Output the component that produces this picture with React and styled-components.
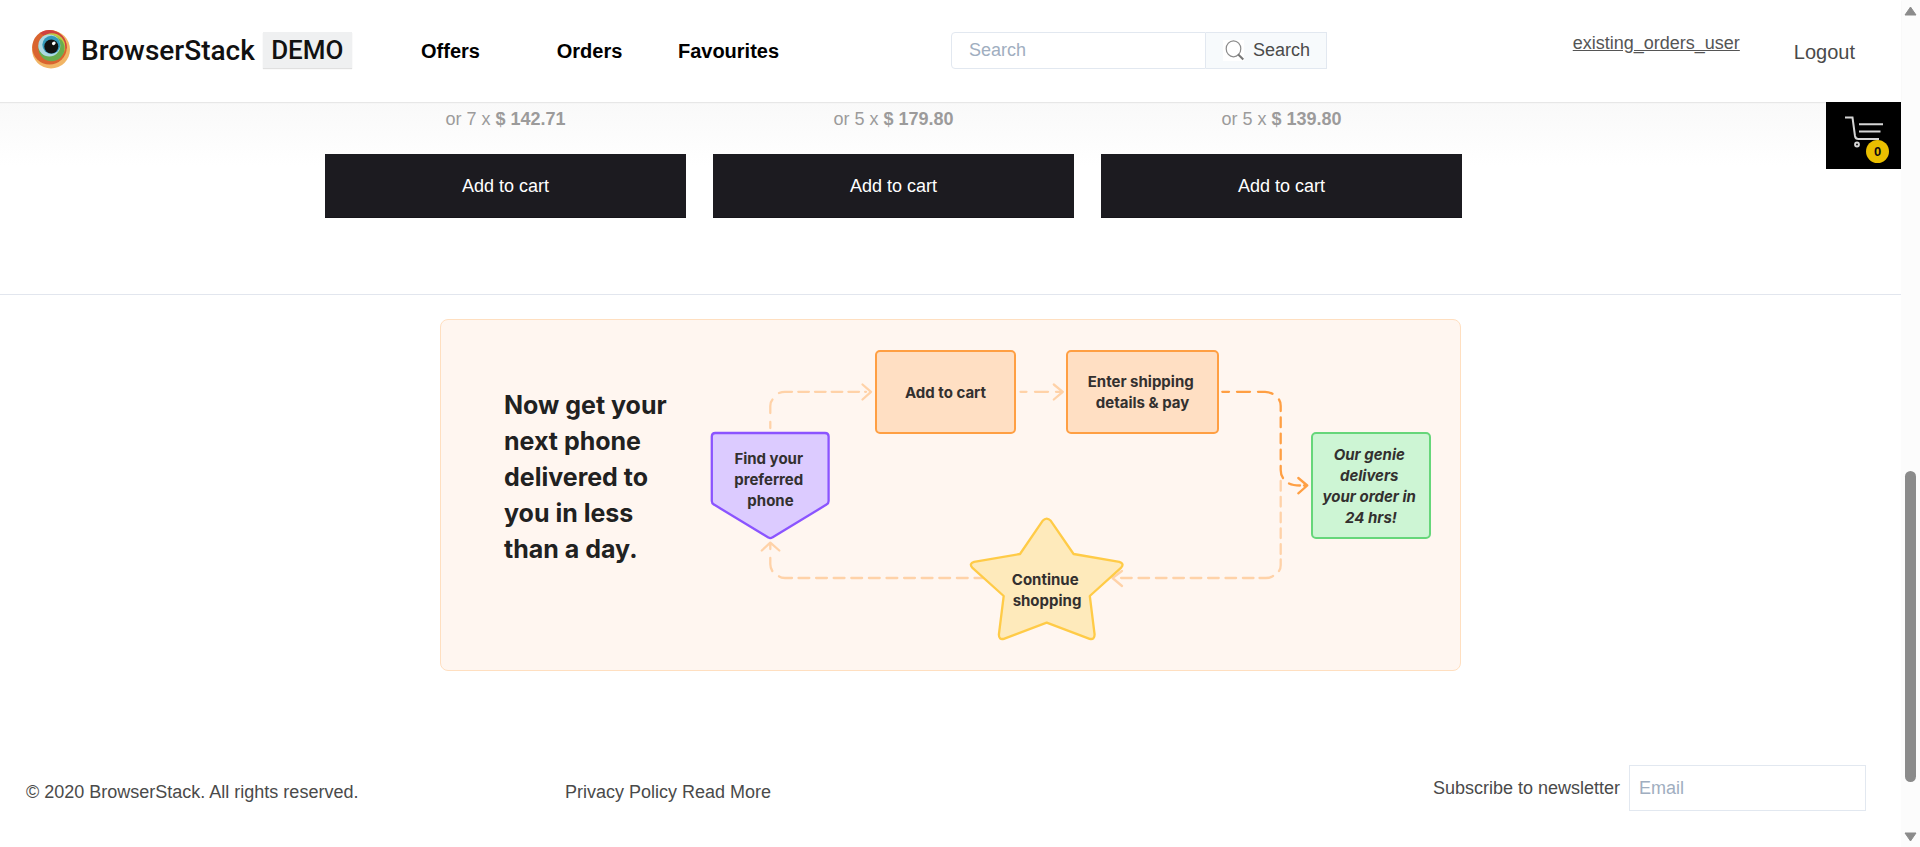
import React from "react";
import styled, { createGlobalStyle, css } from "styled-components";

const GlobalStyle = createGlobalStyle`
  *, *::before, *::after { box-sizing: border-box; }
  body {
    margin: 0;
    background: #fff;
    color: #4a4a4a;
    font-family: Arial, "Liberation Sans", sans-serif;
    font-size: 18px;
    line-height: 24px;
  }
  button, input { font: inherit; color: inherit; }
  a { color: inherit; text-decoration: none; }
  p, h2 { margin: 0; }
`;

const Frame = styled.div`
  display: grid;
  grid-template-columns: minmax(0, 1fr) 19px;
  min-height: 100vh;
`;

const Page = styled.div`
  position: relative;
  display: flex;
  flex-direction: column;
`;

/* Header */

const Header = styled.header`
  position: relative;
  z-index: 1;
  display: flex;
  align-items: center;
  height: 102px;
  padding: 0 46px 2px 31px;
  box-shadow: 0 1px 1px rgba(0, 0, 0, 0.07);
  background: #fff;
`;

const HeaderShade = styled.div`
  position: absolute;
  top: 102px;
  left: 0;
  right: 0;
  height: 64px;
  background: linear-gradient(#f9f9f9, #fff);
`;

const Brand = styled.a`
  display: flex;
  align-items: center;
  width: 350px;
  flex: none;
  color: #111;
  font-family: Roboto, sans-serif;
  font-size: 28px;
  font-weight: 500;
  line-height: 36px;
`;

const BrandName = styled.span`
  margin-left: 10px;
  padding-top: 2px;
`;

const DemoTag = styled.span`
  margin-left: 8px;
  width: 89px;
  text-align: center;
  background: #eff0f1;
  box-shadow: 0 1px 1px rgba(0, 0, 0, 0.12);
  font-size: 26px;
`;

const Nav = styled.nav`
  display: grid;
  grid-template-columns: repeat(3, 139px);
  flex: none;
  padding-top: 2px;
  text-align: center;
  color: #000;
  font-size: 20px;
  font-weight: 700;
`;

const SearchForm = styled.form`
  display: flex;
  height: 37px;
  margin-left: 153px;
`;

const SearchInput = styled.input`
  width: 255px;
  padding: 0 17px;
  border: 1px solid #e2e8f0;
  border-radius: 4px 0 0 4px;
  background: #fff;
  outline: none;
  &::placeholder { color: #a0aec0; opacity: 1; }
`;

const SearchButton = styled.button`
  display: flex;
  align-items: center;
  gap: 9px;
  padding: 0 16px 0 17px;
  border: 1px solid #e2e8f0;
  border-left: 0;
  background: #f7fafc;
`;

const Account = styled.div`
  display: flex;
  align-items: center;
  gap: 54px;
  margin-left: auto;
`;

const UserLink = styled.a`
  padding-bottom: 14px;
  text-decoration: underline;
  color: #555;
`;

const LogoutLink = styled.a`
  padding-top: 4px;
  font-size: 20px;
`;

const CartButton = styled.button`
  position: absolute;
  z-index: 2;
  top: 102px;
  right: 0;
  width: 75px;
  height: 67px;
  padding: 0;
  border: 0;
  background: #000;
`;

const CartCount = styled.span`
  position: absolute;
  right: 12px;
  bottom: 6px;
  width: 23px;
  height: 23px;
  border-radius: 50%;
  background: #eabf00;
  color: #0c0b10;
  font-size: 13px;
  font-weight: 700;
  line-height: 23px;
  text-align: center;
`;

/* Products */

const Main = styled.main`
  position: relative;
  width: 100%;
  max-width: 1251px;
  margin: 0 auto;
  padding: 5px 0 76px;
`;

const Shelf = styled.div`
  display: grid;
  grid-template-columns: repeat(3, 1fr);
  gap: 27px;
  width: 91%;
  max-width: 1137px;
`;

const Product = styled.article`
  display: grid;
  gap: 23px;
  text-align: center;
`;

const Installment = styled.p`
  color: #9c9b9b;
`;

const AddButton = styled.button`
  height: 64px;
  border: 0;
  box-shadow: inset 0 -1px 0 #151419;
  background: #1c1b20;
  color: #fff;
`;

/* Delivery banner */

const BannerArea = styled.section`
  padding: 24px 0 0;
  border-top: 1px solid #e2e6ee;
`;

const Banner = styled.div`
  display: flex;
  justify-content: space-between;
  max-width: 1021px;
  margin: 0 auto;
  padding: 20px 20px 20px 63px;
  border: 1px solid #ffdfc0;
  border-radius: 8px;
  background: #fff6f0;
  font-family: Inter, sans-serif;
`;

const Pitch = styled.h2`
  margin-top: 47px;
  color: #212121;
  font-size: 25px;
  font-weight: 700;
  line-height: 36px;
  white-space: pre;
`;

const Canvas = styled.div`
  position: relative;
  flex: none;
  width: 740px;
  height: 310px;
`;

const Drawing = styled.svg`
  display: block;
  fill: none;
  stroke-width: 2.3;
  stroke-linecap: round;
  stroke-linejoin: round;
`;

const tones = {
  orange: css`background: #ffdfc3; border-color: #ff9f43;`,
  green: css`background: #cdf5d4; border-color: #66d67a; font-style: italic;`,
};

const Node = styled.div`
  position: absolute;
  left: ${(p) => p.$x}px;
  top: ${(p) => p.$y}px;
  width: ${(p) => p.$w}px;
  height: ${(p) => p.$h}px;
  display: grid;
  place-items: center;
  border: 2px solid transparent;
  border-radius: 5px;
  color: #33302f;
  font-size: 15px;
  font-weight: 700;
  line-height: 21px;
  text-align: center;
  white-space: pre;
  ${(p) => tones[p.$tone]}
`;

/* Footer */

const Footer = styled.footer`
  display: grid;
  grid-template-columns: 539px auto 1fr;
  align-items: center;
  margin-top: auto;
  padding: 94px 35px 36px 26px;
`;

const FooterText = styled.div`
  padding-top: 8px;
`;

const Newsletter = styled.form`
  display: flex;
  align-items: center;
  justify-content: flex-end;
  gap: 9px;
`;

const EmailInput = styled.input`
  width: 237px;
  height: 46px;
  padding: 0 9px;
  border: 1px solid #e2e8f0;
  background: #fff;
  outline: none;
  &::placeholder { color: #a0aec0; opacity: 1; }
`;

/* Scroll rail */

const Rail = styled.div`
  display: flex;
  flex-direction: column;
  align-items: center;
  padding: 6px 0 5px;
  background: #fcfcfc;
`;

const Track = styled.div`
  flex: 1;
  display: grid;
  grid-template-rows: 455fr 311fr 50fr;
`;

const Thumb = styled.div`
  grid-row: 2;
  width: 11px;
  border-radius: 6px;
  background: #8b8b8b;
`;

const products = [
  { count: 7, price: "142.71" },
  { count: 5, price: "179.80" },
  { count: 5, price: "139.80" },
];

const BrandMark = () => (
  <svg width="40" height="40" viewBox="0 1 40 40" aria-hidden="true">
    <circle cx="20" cy="20.5" r="19" fill="#f1b565" />
    <circle cx="18.5" cy="18.3" r="17.3" fill="#d9642f" />
    <path d="M9 4A17.3 17.3 0 0 1 35.6 20L31 13Q23 4 12 6Z" fill="#cf4140" />
    <circle cx="21" cy="17.5" r="13.2" fill="#bfcc45" />
    <circle cx="20.5" cy="19.3" r="13" fill="#69ad4e" />
    <path d="M11 10Q21 2 31 11Q25 8 20 9Z" fill="#bfcc45" />
    <circle cx="18.3" cy="16.5" r="11" fill="#add8e2" />
    <circle cx="20.3" cy="15.8" r="9" fill="#3299ba" />
    <circle cx="20.3" cy="17.5" r="7" fill="#111" />
    <ellipse cx="22.8" cy="14.3" rx="2" ry="1.6" fill="#fff" transform="rotate(-40 22.8 14.3)" />
  </svg>
);

const SearchIcon = () => (
  <svg width="21" height="21" viewBox="0 0 21 21" fill="none" aria-hidden="true">
    <rect width="21" height="21" fill="#fff" />
    <ellipse cx="10.5" cy="8.8" rx="7.3" ry="8" stroke="#8b8b8b" strokeWidth="1.2" />
    <path d="M15 14.2L20.3 19.5" stroke="#777" strokeWidth="2" />
  </svg>
);

const CartIcon = () => (
  <svg width="75" height="67" viewBox="0 0 75 67" fill="none" stroke="#d5d5d5" strokeWidth="2" aria-hidden="true">
    <path d="M19 15.5H26.5L29 34Q29.5 37 32.5 37H53" />
    <path d="M33 22.3H57M33 29.5H54.5" />
    <circle cx="31" cy="42.5" r="1.9" />
    <circle cx="50" cy="42.5" r="1.9" />
  </svg>
);

const FlowDrawing = () => (
  <Drawing width="740" height="310" viewBox="700 340 740 310" aria-hidden="true">
    <g stroke="#ffd2a8">
      <path d="M770.3 428V422M770.3 413V406Q770.3 402 772.5 399.5M779 393Q782 391.8 785 391.8H792" />
      <path d="M798.3 391.8H866" strokeDasharray="10.6 6.1" />
      <path d="M862.5 384.5L871 391.8L862.5 399.5" />
      <path d="M1020.5 391.8H1026.5M1035 391.8H1048M1056 391.8H1062M1053.8 384.5L1062.8 391.8L1053.8 399.5" />
      <path d="M1280.7 481V558" strokeDasharray="9.7 6.1" />
      <path d="M1280.7 559.5V565Q1280.7 569 1279 571M1273 576Q1270 578 1266 578H1259.5" />
      <path d="M1253.5 578H1117" strokeDasharray="10.6 6.8" />
      <path d="M1122 571L1112.5 578L1122 586" />
      <path d="M798.5 578H1000" strokeDasharray="10.8 6.8" />
      <path d="M792 578H785Q781 578 779 576.3M772.3 571Q770.3 568 770.3 564V558M770.3 549V543M761.8 550.5L770.3 542.7L779.3 550.5" />
    </g>
    <g stroke="#ff9f43">
      <path d="M1222.3 391.8H1229M1237 391.8H1250M1258 391.8H1265Q1269 391.8 1272.5 393.8M1279 399.5Q1280.7 402 1280.7 406V411" />
      <path d="M1280.7 417.5V461" strokeDasharray="9.7 6.4" />
      <path d="M1280.7 466V470Q1280.7 475 1283 478M1289 483.5Q1293 485.5 1300 485.5M1304 485.5H1307M1298.3 478L1307.3 485.5L1298.3 493.3" />
    </g>
    <path
      fill="#dccbff"
      stroke="#8b54ff"
      d="M715.3 433H825Q828.6 433 828.6 436.6V501Q828.6 503.5 826.5 504.6L772.3 537.4Q770.3 538.8 768.3 537.4L714 504.6Q711.8 503.5 711.8 501V436.6Q711.8 433 715.3 433Z"
    />
    <path
      fill="#feeabb"
      stroke="#ffcb47"
      d="M1042.6 520.8Q1046.7 516.3 1050.8 520.8L1073.6 554L1119.3 561.8Q1124.6 563.5 1121.2 567.6L1089.8 596L1094.6 634.5Q1094.6 640 1089.6 638.8L1046.7 622.7L1003.8 638.8Q998.8 640 998.9 634.5L1003.7 596L972.2 567.6Q968.8 563.5 974.1 561.8L1020 554Z"
    />
  </Drawing>
);

export default function App() {
  const stop = (e) => e.preventDefault();
  return (
    <>
      <GlobalStyle />
      <Frame>
        <Page>
          <Header>
            <Brand href="#">
              <BrandMark />
              <BrandName>BrowserStack</BrandName>
              <DemoTag>DEMO</DemoTag>
            </Brand>
            <Nav>
              <a href="#offers">Offers</a>
              <a href="#orders">Orders</a>
              <a href="#favourites">Favourites</a>
            </Nav>
            <SearchForm role="search" onSubmit={stop}>
              <SearchInput type="text" placeholder="Search" aria-label="Search" />
              <SearchButton type="submit">
                <SearchIcon />
                Search
              </SearchButton>
            </SearchForm>
            <Account>
              <UserLink href="#user">existing_orders_user</UserLink>
              <LogoutLink href="#logout">Logout</LogoutLink>
            </Account>
          </Header>
          <HeaderShade />
          <CartButton type="button" aria-label="Cart">
            <CartIcon />
            <CartCount>0</CartCount>
          </CartButton>

          <Main>
            <Shelf>
              {products.map((p) => (
                <Product key={p.price}>
                  <Installment>
                    or {p.count} x <b>$ {p.price}</b>
                  </Installment>
                  <AddButton type="button">Add to cart</AddButton>
                </Product>
              ))}
            </Shelf>
          </Main>

          <BannerArea>
            <Banner>
              <Pitch>{"Now get your\nnext phone\ndelivered to\nyou in less\nthan a day."}</Pitch>
              <Canvas>
                <FlowDrawing />
                <Node $x={11} $y={92} $w={119} $h={94}>{"Find your \npreferred \nphone"}</Node>
                <Node $x={175} $y={10} $w={141} $h={84} $tone="orange">Add to cart</Node>
                <Node $x={366} $y={10} $w={153} $h={84} $tone="orange">{"Enter shipping \ndetails & pay"}</Node>
                <Node $x={611} $y={92} $w={120} $h={107} $tone="green">{"Our genie \ndelivers \nyour order in \n24 hrs!"}</Node>
                <Node $x={287} $y={208} $w={120} $h={84}>{"Continue \nshopping"}</Node>
              </Canvas>
            </Banner>
          </BannerArea>

          <Footer>
            <FooterText>© 2020 BrowserStack. All rights reserved.</FooterText>
            <FooterText>
              <a href="#privacy">Privacy Policy</a> <a href="#more">Read More</a>
            </FooterText>
            <Newsletter onSubmit={stop}>
              <label htmlFor="email">Subscribe to newsletter</label>
              <EmailInput id="email" type="email" placeholder="Email" />
            </Newsletter>
          </Footer>
        </Page>

        <Rail aria-hidden="true">
          <svg width="13" height="10" viewBox="0 0 13 10">
            <path d="M6.5 1L12 9H1Z" fill="#8b8b8b" stroke="#8b8b8b" strokeLinejoin="round" />
          </svg>
          <Track>
            <Thumb />
          </Track>
          <svg width="13" height="10" viewBox="0 0 13 10">
            <path d="M6.5 9L12 1H1Z" fill="#8b8b8b" stroke="#8b8b8b" strokeLinejoin="round" />
          </svg>
        </Rail>
      </Frame>
    </>
  );
}
